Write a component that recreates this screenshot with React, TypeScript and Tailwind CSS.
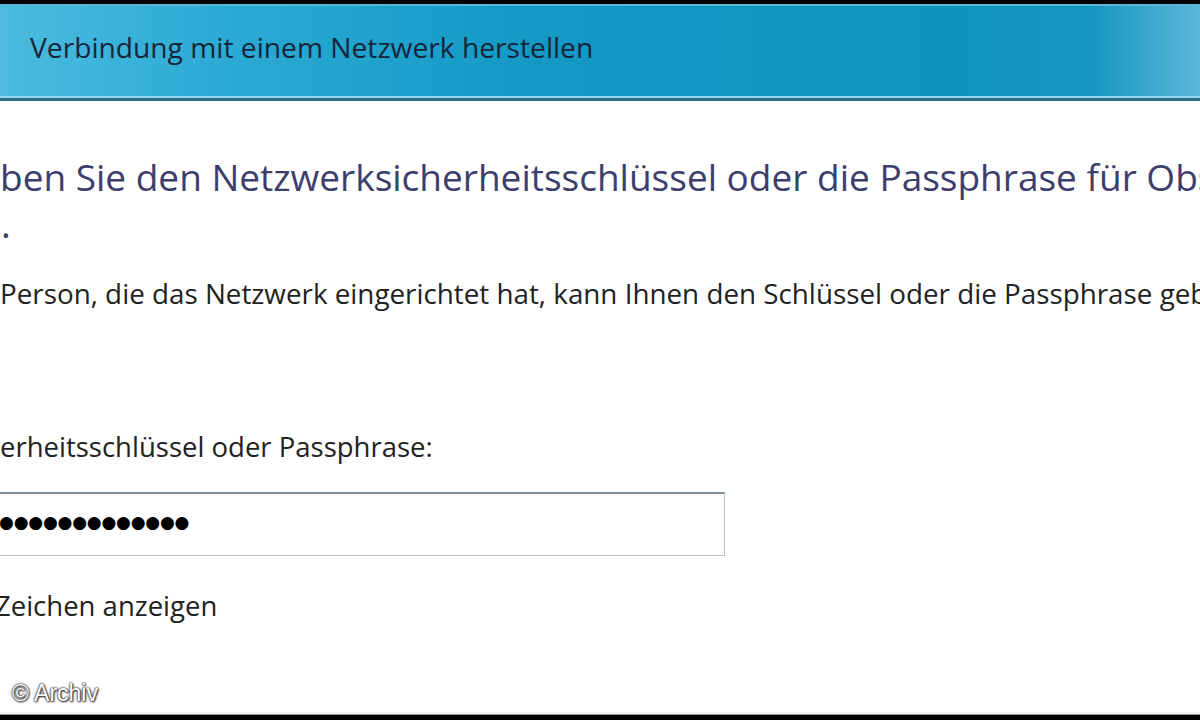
import React from "react";

const ui = "font-['Open_Sans','Noto_Sans',sans-serif]";

function Header() {
  return (
    <div className="flex flex-col">
      <div className="h-[4px] bg-black" />
      <div className="h-[2px] bg-[#5ab8d6]" />
      <div className="h-[90px] flex items-center pl-[30px] bg-[linear-gradient(90deg,#4cbbdf_0%,#2aa9d4_20%,#1399c4_45%,#0f93bd_80%,#1796c0_91%,#5cb7d9_100%)]">
        <span className={`${ui} text-[28.2px] leading-[36px] text-[#15263a] pb-[8px]`}>
          Verbindung mit einem Netzwerk herstellen
        </span>
      </div>
      <div className="h-[2px] bg-[#8fd4e8]" />
      <div className="h-[3px] bg-[#2c6f86]" />
    </div>
  );
}

function PasswordBox() {
  return (
    <div className="w-[727px] h-[64px] -ml-[2px] border border-[#b9c5cd] border-t-[#7f8e9a] border-t-2 bg-white flex items-center">
      <span className="font-['DejaVu_Sans',sans-serif] text-[17px] tracking-[-0.2px] text-black pb-[4px]">
        ●●●●●●●●●●●●●
      </span>
    </div>
  );
}

export default function App() {
  return (
    <div className="w-[1200px] h-[720px] bg-white flex flex-col overflow-hidden relative">
      <Header />
      <div className={`${ui} flex-1 flex flex-col whitespace-nowrap overflow-hidden`}>
        <div className="pt-[54px] text-[37px] leading-[44px] text-[#3d3e6c]">
          ben Sie den Netzwerksicherheitsschlüssel oder die Passphrase für Obs
        </div>
        <div className="pt-[3px] pl-[1px] text-[37px] leading-[44px] text-[#3d3e6c]">.</div>
        <div className="pt-[29px] text-[27.8px] leading-[36px] text-[#222222]">
          Person, die das Netzwerk eingerichtet hat, kann Ihnen den Schlüssel oder die Passphrase geb
        </div>
        <div className="pt-[118px] text-[27.5px] leading-[36px] text-[#222222]">
          erheitsschlüssel oder Passphrase:
        </div>
        <div className="pt-[27px]">
          <PasswordBox />
        </div>
        <div className="pt-[32px] text-[27.5px] leading-[36px] text-[#222222] -ml-[5px]">
          Zeichen anzeigen
        </div>
      </div>
      <div className="h-[2px] bg-[#f4f4f4]" />
      <div className="h-[1px] bg-[#9a9a9a]" />
      <div className="h-[5px] bg-black" />
      <span className="absolute left-[12px] bottom-[10px] font-['Liberation_Sans',Arial,sans-serif] text-[23px] text-white [text-shadow:0_0_2px_#222,0_0_2px_#222,1px_1px_2px_#333]">
        © Archiv
      </span>
    </div>
  );
}
